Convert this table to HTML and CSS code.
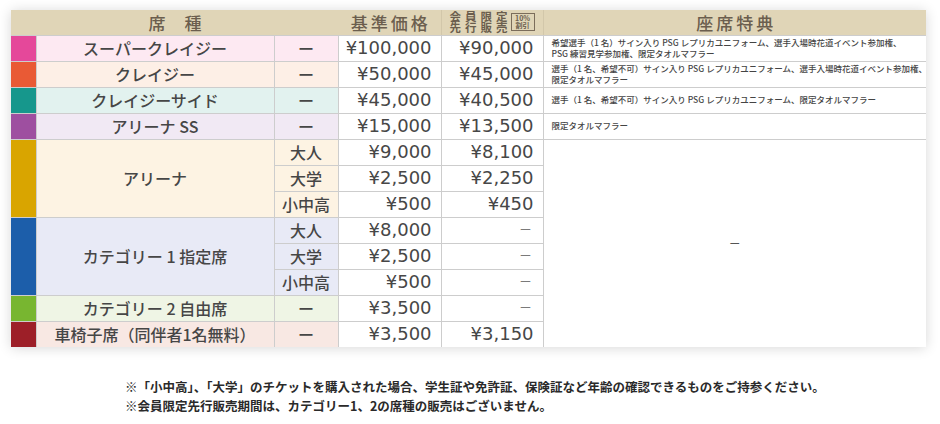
FILE: index.html
```html
<!DOCTYPE html>
<html lang="ja">
<head>
<meta charset="utf-8">
<title>席種</title>
<link rel="stylesheet" href="styles.css">
</head>
<body>
<div class="page">
  <table class="seats">
    <colgroup>
      <col class="c-strip"><col class="c-name"><col class="c-sub"><col class="c-base"><col class="c-member"><col class="c-benefit">
    </colgroup>
    <thead>
      <tr class="head">
        <th colspan="3" class="h-seat">席　種</th>
        <th class="h-base">基準価格</th>
        <th class="h-member">
          <div class="member-head">
            <span class="mh-text"><span class="mh-line">会員限定</span><span class="mh-line">先行販売</span></span>
            <span class="mh-badge"><span class="mb-line">10%</span><span class="mb-line">割引</span></span>
          </div>
        </th>
        <th class="h-benefit">座席特典</th>
      </tr>
    </thead>
    <tbody>
      <tr class="r-super">
        <td class="strip"></td><td class="name">スーパークレイジー</td><td class="sub">ー</td>
        <td class="price">¥100,000</td><td class="price">¥90,000</td>
        <td class="benefit">希望選手（1 名）サイン入り PSG レプリカユニフォーム、選手入場時花道イベント参加権、<br>PSG 練習見学参加権、限定タオルマフラー</td>
      </tr>
      <tr class="r-crazy">
        <td class="strip"></td><td class="name">クレイジー</td><td class="sub">ー</td>
        <td class="price">¥50,000</td><td class="price">¥45,000</td>
        <td class="benefit">選手（1 名、希望不可）サイン入り PSG レプリカユニフォーム、選手入場時花道イベント参加権、<br>限定タオルマフラー</td>
      </tr>
      <tr class="r-side">
        <td class="strip"></td><td class="name">クレイジーサイド</td><td class="sub">ー</td>
        <td class="price">¥45,000</td><td class="price">¥40,500</td>
        <td class="benefit">選手（1 名、希望不可）サイン入り PSG レプリカユニフォーム、限定タオルマフラー</td>
      </tr>
      <tr class="r-ss">
        <td class="strip"></td><td class="name">アリーナ SS</td><td class="sub">ー</td>
        <td class="price">¥15,000</td><td class="price">¥13,500</td>
        <td class="benefit">限定タオルマフラー</td>
      </tr>
      <tr class="r-arena">
        <td class="strip" rowspan="3"></td><td class="name" rowspan="3">アリーナ</td><td class="sub">大人</td>
        <td class="price">¥9,000</td><td class="price">¥8,100</td>
        <td class="benefit-none" rowspan="8">ー</td>
      </tr>
      <tr class="r-arena">
        <td class="sub">大学</td><td class="price">¥2,500</td><td class="price">¥2,250</td>
      </tr>
      <tr class="r-arena">
        <td class="sub">小中高</td><td class="price">¥500</td><td class="price">¥450</td>
      </tr>
      <tr class="r-cat1">
        <td class="strip" rowspan="3"></td><td class="name" rowspan="3">カテゴリー&nbsp;1&nbsp;指定席</td><td class="sub">大人</td>
        <td class="price">¥8,000</td><td class="price dash">ー</td>
      </tr>
      <tr class="r-cat1">
        <td class="sub">大学</td><td class="price">¥2,500</td><td class="price dash">ー</td>
      </tr>
      <tr class="r-cat1">
        <td class="sub">小中高</td><td class="price">¥500</td><td class="price dash">ー</td>
      </tr>
      <tr class="r-cat2">
        <td class="strip"></td><td class="name">カテゴリー&nbsp;2&nbsp;自由席</td><td class="sub">ー</td>
        <td class="price">¥3,500</td><td class="price dash">ー</td>
      </tr>
      <tr class="r-wheel">
        <td class="strip"></td><td class="name">車椅子席（同伴者1名無料）</td><td class="sub">ー</td>
        <td class="price">¥3,500</td><td class="price">¥3,150</td>
      </tr>
    </tbody>
  </table>
  <div class="notes">
    <p>※「小中高」、「大学」のチケットを購入された場合、学生証や免許証、保険証など年齢の確認できるものをご持参ください。</p>
    <p>※会員限定先行販売期間は、カテゴリー1、2の席種の販売はございません。</p>
  </div>
</div>
</body>
</html>
```

FILE: styles.css
```css
html, body {
  margin: 0;
  padding: 0;
  background: #ffffff;
}
body {
  font-family: "Noto Sans CJK JP", "Noto Sans", sans-serif;
  color: #464646;
}
.page {
  width: 940px;
  height: 424px;
  padding: 10px 0 0 11px;
  box-sizing: border-box;
  overflow: hidden;
}
.seats {
  border-collapse: collapse;
  table-layout: fixed;
  width: 915px;
  box-shadow: 0 1px 12px rgba(0, 0, 0, 0.16);
  background: #ffffff;
}
.c-strip { width: 25px; }
.c-name { width: 238px; }
.c-sub { width: 64px; }
.c-base { width: 103px; }
.c-member { width: 102px; }
.c-benefit { width: 383px; }

.seats th, .seats td {
  padding: 0;
  border: 1px solid #cdcdcd;
  line-height: 1;
}
.seats .head {
  height: 25px;
  background: #e0d5b7;
}
.seats .head th {
  border-top: none;
  border-left: none;
  border-right: none;
  color: #6b5e4e;
  font-weight: 500;
  font-size: 17px;
  text-align: center;
  vertical-align: middle;
}
.seats .head .h-base, .seats .head .h-member {
  border-right: 1px solid #d2c7aa;
}
.seats .h-seat { padding-left: 2px; letter-spacing: 1px; }
.seats .h-base, .seats .h-benefit { letter-spacing: 3px; padding-left: 3px; }
.member-head {
  display: flex;
  align-items: center;
  justify-content: center;
  gap: 3px;
}
.mh-text {
  display: flex;
  flex-direction: column;
  font-size: 11.5px;
  line-height: 11.5px;
  letter-spacing: 4px;
  margin-right: -4px;
  font-weight: 700;
}
.mh-line { display: block; white-space: nowrap; }
.mh-badge {
  display: flex;
  flex-direction: column;
  align-items: center;
  justify-content: center;
  width: 22px;
  height: 16px;
  border: 1px solid #7b6d5b;
  font-weight: 700;
}
.mb-line {
  display: block;
  font-size: 7px;
  line-height: 7.5px;
  white-space: nowrap;
}
.seats tbody tr { height: 26px; }

.seats .strip { border-left: none; }
.seats .name {
  text-align: center;
  font-size: 16px;
  font-weight: 500;
}
.seats .sub {
  text-align: center;
  font-size: 16px;
  font-weight: 500;
}
.seats .price {
  background: #ffffff;
  text-align: right;
  padding-right: 9px;
  font-family: "DejaVu Sans", "Noto Sans CJK JP", sans-serif;
  font-size: 18px;
  color: #474747;
}
.seats .price.dash {
  font-family: "Noto Sans CJK JP", sans-serif;
  font-size: 12px;
  color: #7a7a7a;
  padding-right: 11px;
}
.seats .benefit {
  background: #ffffff;
  font-size: 8.5px;
  line-height: 11.5px;
  padding-left: 8px;
  color: #444444;
  font-weight: 500;
  white-space: nowrap;
  border-right: none;
}
.seats .benefit-none {
  background: #ffffff;
  text-align: center;
  font-size: 11px;
  color: #555555;
  border-right: none;
  border-bottom: none;
}

.r-super { background: #fde9f2; }
.r-super .strip { background: #e5489a; }
.r-crazy { background: #fdefe6; }
.r-crazy .strip { background: #e95a35; }
.r-side { background: #e2f2ef; }
.r-side .strip { background: #16978c; }
.r-ss { background: #f1e9f4; }
.r-ss .strip { background: #9e4fa0; }
.r-arena { background: #fdf3e3; }
.r-arena .strip { background: #d9a500; }
.r-cat1 { background: #e8eaf6; }
.r-cat1 .strip { background: #1c5eaa; }
.r-cat2 { background: #eff5e5; }
.r-cat2 .strip { background: #78b630; }
.r-wheel { background: #f8e8e3; }
.r-wheel .strip { background: #9d1f28; }
.seats .r-wheel td { border-bottom: none; }

.notes {
  margin: 30px 0 0 114px;
  font-size: 12.5px;
  line-height: 19px;
  font-weight: 700;
  color: #2a2a2a;
}
.notes p { margin: 0; white-space: nowrap; }
```
